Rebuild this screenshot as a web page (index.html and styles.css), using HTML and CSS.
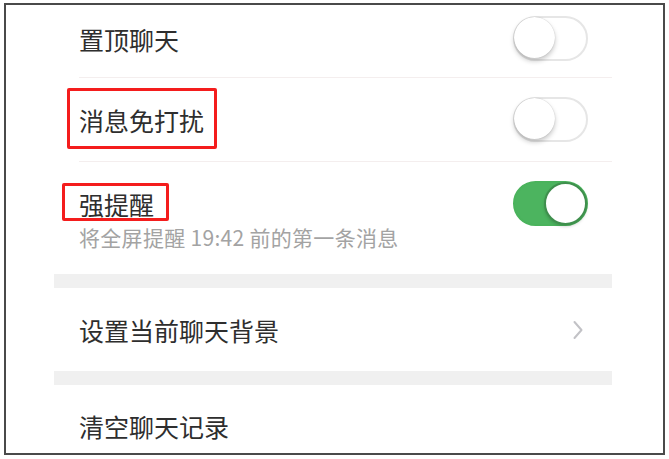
FILE: index.html
```html
<!DOCTYPE html>
<html lang="zh-CN">
<head>
<meta charset="utf-8">
<title>聊天设置</title>
<link rel="stylesheet" href="styles.css">
</head>
<body>
<div class="frame">
  <div class="panel">
    <div class="row row-first">
      <span class="label">置顶聊天</span>
      <span class="switch"><span class="knob"></span></span>
    </div>
    <div class="sep"></div>
    <div class="row row-mid">
      <span class="label boxed boxed-a">消息免打扰</span>
      <span class="switch"><span class="knob"></span></span>
    </div>
    <div class="sep"></div>
    <div class="row row-strong">
      <div class="stack">
        <span class="label boxed boxed-b">强提醒</span>
        <span class="sub">将全屏提醒 19:42 前的第一条消息</span>
      </div>
      <span class="switch switch-on"><span class="knob"></span></span>
    </div>
    <div class="band"></div>
    <div class="row row-mid">
      <span class="label">设置当前聊天背景</span>
      <svg class="chev" width="10" height="20" viewBox="0 0 10 20"><path d="M1.5 2 L8.5 10 L1.5 18" fill="none" stroke="#c2c2c6" stroke-width="2" stroke-linecap="round" stroke-linejoin="round"/></svg>
    </div>
    <div class="band"></div>
    <div class="row row-last">
      <span class="label">清空聊天记录</span>
    </div>
  </div>
</div>
</body>
</html>
```

FILE: styles.css
```css
html, body {
  margin: 0;
  padding: 0;
  background: #ffffff;
}
body {
  width: 669px;
  height: 459px;
  overflow: hidden;
  font-family: "Noto Sans CJK SC", "Noto Sans", sans-serif;
}
.frame {
  box-sizing: border-box;
  margin: 3px 0 0 4px;
  width: 661px;
  height: 452px;
  border: 2px solid #4a4a4a;
  overflow: hidden;
  background: #fff;
}
.panel {
  margin-left: 48px;
  width: 558px;
  display: flex;
  flex-direction: column;
}
.row {
  box-sizing: border-box;
  display: flex;
  align-items: center;
  justify-content: space-between;
  padding: 0 24px 0 25px;
  background: #fff;
}
.row-first {
  height: 72px;
  padding-bottom: 5px;
}
.row-mid {
  height: 83px;
}
.row-strong {
  height: 112px;
  align-items: flex-start;
  padding-top: 19px;
}
.row-last {
  height: 82px;
}
.stack {
  display: flex;
  flex-direction: column;
  align-items: flex-start;
  margin-top: 8px;
  gap: 5px;
}
.label {
  font-size: 25px;
  line-height: 30px;
  color: #2e2e2e;
  white-space: nowrap;
}
.sub {
  font-size: 21px;
  line-height: 26px;
  letter-spacing: 0.3px;
  color: #a3a3a3;
  white-space: nowrap;
}
.boxed {
  position: relative;
}
.boxed::after {
  content: "";
  position: absolute;
  border: 3px solid #f41d1d;
  border-radius: 2px;
}
.boxed-a::after {
  top: -17px;
  bottom: -14px;
  left: -12px;
  right: -13px;
}
.boxed-b::after {
  top: -6px;
  bottom: -2px;
  left: -17px;
  right: -15px;
}
.sep {
  height: 1px;
  margin-left: 25px;
  background: #f4eeee;
}
.band {
  height: 14px;
  background: #f0f0f0;
}
.switch {
  box-sizing: border-box;
  position: relative;
  flex: none;
  width: 75px;
  height: 45px;
  border-radius: 23px;
  border: 2px solid #e6e6e6;
  background: #ffffff;
}
.switch .knob {
  position: absolute;
  top: -1px;
  left: -1px;
  width: 41px;
  height: 41px;
  border-radius: 50%;
  background: #fff;
  box-shadow: 0 3px 5px rgba(0,0,0,0.22), 0 0 1px rgba(0,0,0,0.25);
}
.switch-on {
  background: #4cb45f;
  border-color: #4ab35c;
}
.switch-on .knob {
  left: auto;
  right: -1px;
  border: 2px solid #3f8f4d;
  box-sizing: border-box;
  width: 43px;
  height: 43px;
  top: -1px;
  box-shadow: 0 2px 3px rgba(0,0,0,0.15);
}
.chev {
  margin-right: 5px;
}
```
